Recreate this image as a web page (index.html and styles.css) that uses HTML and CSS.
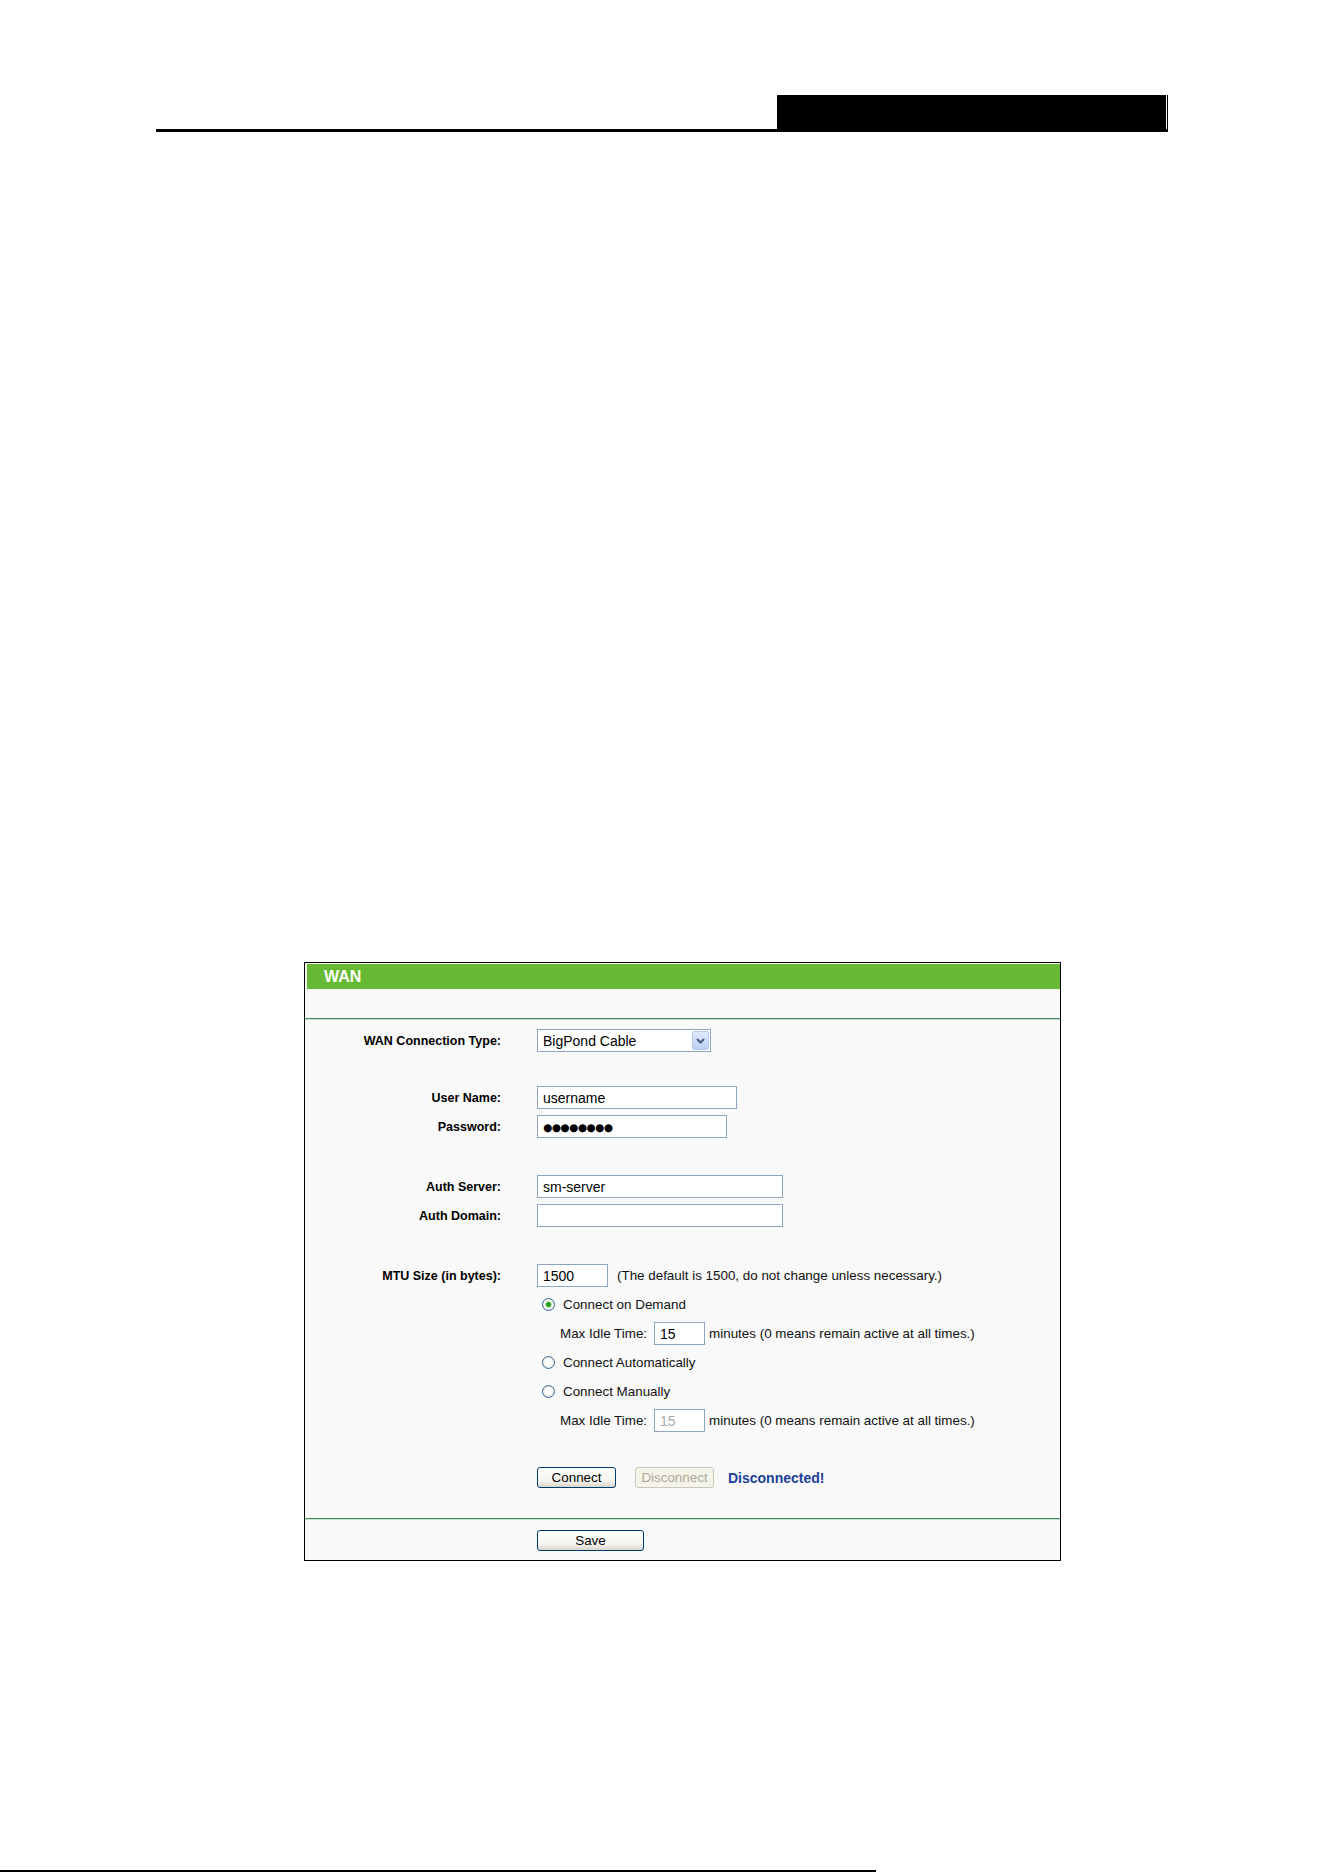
FILE: index.html
```html
<!DOCTYPE html>
<html lang="en">

<head>
    <meta charset="UTF-8">
    <title>WAN</title>
    <link rel="stylesheet" href="styles.css">
</head>

<body>
    <div class="doc-head">
        <div class="head-box"></div>
    </div>

    <div class="panel">
        <div class="panel-title">WAN</div>
        <div class="sep"></div>

        <form class="form">
            <div class="row">
                <div class="label">WAN Connection Type:</div>
                <div class="field">
                    <div class="select">
                        <span class="select-text">BigPond Cable</span>
                        <span class="select-btn">
                            <svg width="9" height="6" viewBox="0 0 9 6">
                                <polyline points="1,1 4.5,4.5 8,1" fill="none" stroke="#4a5d80" stroke-width="2"/>
                            </svg>
                        </span>
                    </div>
                </div>
            </div>

            <div class="spacer short"></div>

            <div class="row">
                <div class="label">User Name:</div>
                <div class="field"><input class="text-input w-user" type="text" value="username"></div>
            </div>
            <div class="row">
                <div class="label">Password:</div>
                <div class="field"><div class="text-input w-pass dots">●●●●●●●●</div></div>
            </div>

            <div class="spacer"></div>

            <div class="row">
                <div class="label">Auth Server:</div>
                <div class="field"><input class="text-input w-auth" type="text" value="sm-server"></div>
            </div>
            <div class="row">
                <div class="label">Auth Domain:</div>
                <div class="field"><input class="text-input w-auth" type="text" value=""></div>
            </div>

            <div class="spacer"></div>

            <div class="row">
                <div class="label">MTU Size (in bytes):</div>
                <div class="field">
                    <input class="text-input w-mtu" type="text" value="1500">
                    <span class="note mtu-note">(The default is 1500, do not change unless necessary.)</span>
                </div>
            </div>
            <div class="row">
                <div class="label"></div>
                <div class="field">
                    <input class="radio" type="radio" name="mode" checked>
                    <span class="note">Connect on Demand</span>
                </div>
            </div>
            <div class="row">
                <div class="label"></div>
                <div class="field indent">
                    <span class="note idle-label">Max Idle Time:</span>
                    <input class="text-input w-idle" type="text" value="15">
                    <span class="note idle-note">minutes (0 means remain active at all times.)</span>
                </div>
            </div>
            <div class="row">
                <div class="label"></div>
                <div class="field">
                    <input class="radio" type="radio" name="mode">
                    <span class="note">Connect Automatically</span>
                </div>
            </div>
            <div class="row">
                <div class="label"></div>
                <div class="field">
                    <input class="radio" type="radio" name="mode">
                    <span class="note">Connect Manually</span>
                </div>
            </div>
            <div class="row">
                <div class="label"></div>
                <div class="field indent">
                    <span class="note idle-label">Max Idle Time:</span>
                    <input class="text-input w-idle" type="text" value="15" disabled>
                    <span class="note idle-note">minutes (0 means remain active at all times.)</span>
                </div>
            </div>

            <div class="spacer short"></div>

            <div class="row">
                <div class="label"></div>
                <div class="field">
                    <button class="btn w-connect" type="button">Connect</button>
                    <button class="btn w-connect" type="button" disabled>Disconnect</button>
                    <span class="status">Disconnected!</span>
                </div>
            </div>
        </form>

        <div class="sep sep-bottom"></div>

        <div class="save-row">
            <div class="label"></div>
            <div class="field"><button class="btn w-save" type="button">Save</button></div>
        </div>
    </div>

    <div class="doc-foot"></div>
</body>

</html>
```

FILE: styles.css
```css
body {
    margin: 0;
    background-color: #fff;
    color: #000;
    font-family: "Liberation Sans", Arial, sans-serif;
}

.doc-head {
    display: flex;
    justify-content: flex-end;
    width: 1011px;
    margin: 95px 0 0 156px;
    border-bottom: 3px solid #000;
    border-right: 1px solid #000;
}

.head-box {
    width: 389px;
    height: 34px;
    background-color: #000;
    border-right: 1px solid #fff;
}

.panel {
    box-sizing: border-box;
    width: 757px;
    margin: 830px 0 0 304px;
    border: 1px solid #000;
    background-color: #f9f9f9;
}

.panel-title {
    height: 25px;
    margin: 1px 0 29px 2px;
    padding-left: 17px;
    background-color: #66b933;
    color: #fff;
    font-size: 16px;
    font-weight: bold;
    line-height: 25px;
}

.sep {
    border-top: 1px solid #3f8a5e;
    border-bottom: 1px solid #c4ddca;
}

.sep-bottom {
    margin-top: 26px;
}

.form {
    padding-top: 6px;
}

.row,
.save-row {
    display: flex;
    align-items: center;
    height: 29px;
}

.save-row {
    height: 40px;
}

.spacer {
    height: 31px;
}

.spacer.short {
    height: 28px;
}

.label {
    width: 196px;
    flex-shrink: 0;
    text-align: right;
    font-size: 12.5px;
    font-weight: bold;
    color: #000;
}

.field {
    display: flex;
    align-items: center;
    padding-left: 36px;
}

.field.indent {
    padding-left: 59px;
}

/* fake select box */
.select {
    box-sizing: border-box;
    display: flex;
    align-items: center;
    justify-content: space-between;
    width: 174px;
    height: 23px;
    padding: 1px;
    border: 1px solid #8ea4c0;
    background-color: #fff;
}

.select-text {
    padding-left: 4px;
    font-size: 14px;
}

.select-btn {
    box-sizing: border-box;
    display: flex;
    align-items: center;
    justify-content: center;
    width: 17px;
    height: 19px;
    border: 1px solid #b6cbee;
    border-radius: 2px;
    background: linear-gradient(#dfe9fb, #bcd1f6);
}

.text-input {
    box-sizing: border-box;
    height: 23px;
    margin: 0;
    padding: 0 5px;
    border: 1px solid #8ea4c0;
    background-color: #fff;
    color: #000;
    font-family: "Liberation Sans", Arial, sans-serif;
    font-size: 14px;
    outline: none;
}

.text-input:disabled {
    color: #aaa;
    background-color: #fff;
}

.dots {
    display: flex;
    align-items: center;
    font-family: "DejaVu Sans", sans-serif;
    font-size: 10.5px;
    letter-spacing: -0.5px;
}

.w-user { width: 200px; }
.w-pass { width: 190px; }
.w-auth { width: 246px; }
.w-mtu { width: 71px; }
.w-idle { width: 51px; }

.note {
    font-size: 13.4px;
    color: #111;
}

.mtu-note {
    margin-left: 9px;
}

.idle-label {
    margin-right: 7px;
}

.idle-note {
    margin-left: 4px;
}

.radio {
    appearance: none;
    width: 13px;
    height: 13px;
    margin: 0 8px 0 5px;
    border: 1px solid #3b6896;
    border-radius: 50%;
    background: radial-gradient(circle, #fff 0 3px, #e4e3dc 6px);
}

.radio:checked {
    background: radial-gradient(circle, #24a024 0 2px, #bfe3b5 3px, #fff 4px, #e4e3dc 6px);
}

.btn {
    box-sizing: border-box;
    height: 21px;
    padding: 0;
    border: 1px solid #003c74;
    border-radius: 3px;
    background: linear-gradient(#fff, #f4f3ee 70%, #d9d5c8);
    color: #000;
    font-family: "Liberation Sans", Arial, sans-serif;
    font-size: 13.4px;
}

.btn:disabled {
    border-color: #cac8bb;
    background: #f5f4ea;
    color: #aca899;
}

.w-connect { width: 79px; margin-right: 19px; }
.w-connect + .w-connect { margin-right: 14px; }
.w-save { width: 107px; }

.status {
    color: #1c3f9b;
    font-size: 14px;
    font-weight: bold;
}

.doc-foot {
    width: 876px;
    height: 2px;
    margin-top: 309px;
    background-color: #000;
}
```
